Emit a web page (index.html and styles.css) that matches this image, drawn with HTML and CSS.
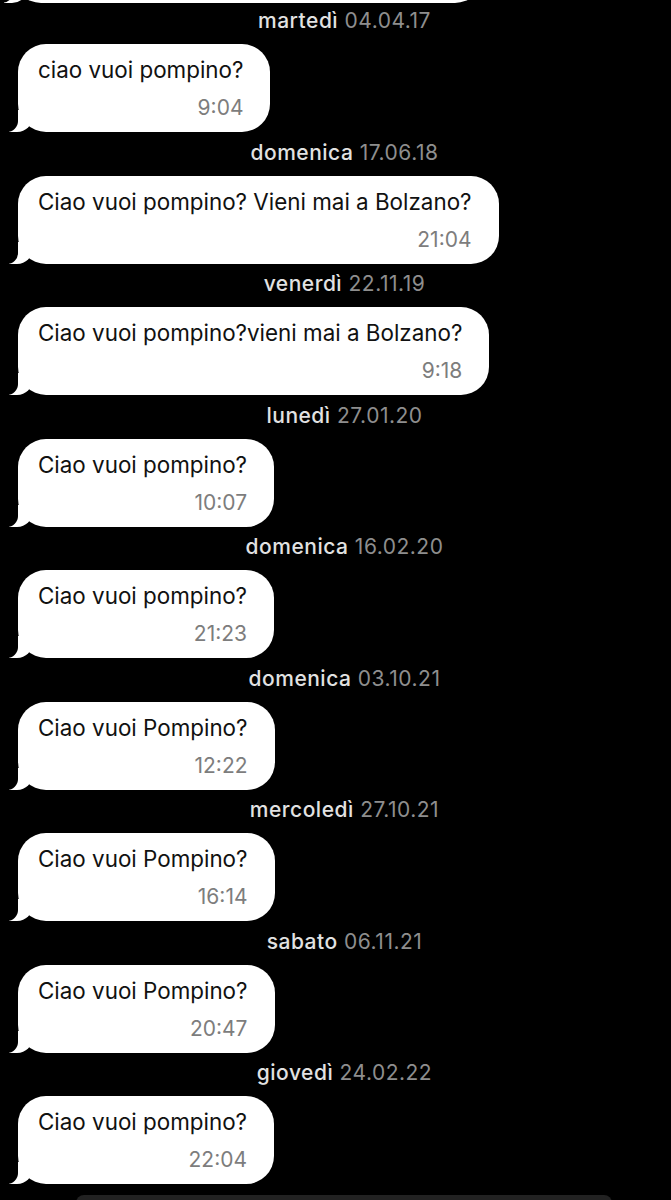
FILE: index.html
```html
<html>
  <head>
    <link rel="stylesheet" href="styles.css">
  </head>
  <body>
    <div class="chat">
      <div class="bubble bubble-cut"></div>

      <div class="day"><span class="dname">martedì</span> 04.04.17</div>
      <div class="bubble">
        <div class="text">ciao vuoi pompino?</div>
        <div class="time">9:04</div>
      </div>

      <div class="day"><span class="dname">domenica</span> 17.06.18</div>
      <div class="bubble">
        <div class="text">Ciao vuoi pompino? Vieni mai a Bolzano?</div>
        <div class="time">21:04</div>
      </div>

      <div class="day"><span class="dname">venerdì</span> 22.11.19</div>
      <div class="bubble">
        <div class="text">Ciao vuoi pompino?vieni mai a Bolzano?</div>
        <div class="time">9:18</div>
      </div>

      <div class="day"><span class="dname">lunedì</span> 27.01.20</div>
      <div class="bubble">
        <div class="text">Ciao vuoi pompino?</div>
        <div class="time">10:07</div>
      </div>

      <div class="day"><span class="dname">domenica</span> 16.02.20</div>
      <div class="bubble">
        <div class="text">Ciao vuoi pompino?</div>
        <div class="time">21:23</div>
      </div>

      <div class="day"><span class="dname">domenica</span> 03.10.21</div>
      <div class="bubble">
        <div class="text">Ciao vuoi Pompino?</div>
        <div class="time">12:22</div>
      </div>

      <div class="day"><span class="dname">mercoledì</span> 27.10.21</div>
      <div class="bubble">
        <div class="text">Ciao vuoi Pompino?</div>
        <div class="time">16:14</div>
      </div>

      <div class="day"><span class="dname">sabato</span> 06.11.21</div>
      <div class="bubble">
        <div class="text">Ciao vuoi Pompino?</div>
        <div class="time">20:47</div>
      </div>

      <div class="day"><span class="dname">giovedì</span> 24.02.22</div>
      <div class="bubble">
        <div class="text">Ciao vuoi pompino?</div>
        <div class="time">22:04</div>
      </div>
    </div>
    <div class="composer"></div>
  </body>
</html>
```

FILE: styles.css
```css
html, body {
  margin: 0;
  width: 100%;
  height: 100%;
  background: #000;
  overflow: hidden;
  font-family: 'Inter', 'Helvetica', arial, sans-serif;
}

.chat {
  display: flex;
  flex-direction: column;
  align-items: flex-start;
  padding: 0 0 0 18px;
}

.day {
  align-self: stretch;
  height: 24px;
  line-height: 26px;
  margin: 0 0 12px;
  text-align: center;
  font-size: 21px;
  letter-spacing: 0.5px;
  color: #8e8e8e;
}

.dname {
  color: #e2e2e2;
  font-weight: 500;
}

.bubble {
  position: relative;
  background: #fff;
  border-radius: 28px;
  padding: 9px 27px 0 20px;
  margin-bottom: 7.5px;
  box-sizing: border-box;
  height: 88px;
  display: flex;
  flex-direction: column;
  align-items: stretch;
}

.bubble::before {
  content: "";
  position: absolute;
  bottom: 0;
  left: -9px;
  width: 24px;
  height: 22px;
  background: #fff;
  border-bottom-right-radius: 16px;
}

.bubble::after {
  content: "";
  position: absolute;
  bottom: 0;
  left: -12px;
  width: 12px;
  height: 22px;
  background: #000;
  border-bottom-right-radius: 11px;
}

.bubble-cut {
  margin-top: -85px;
  margin-left: -5px;
  width: 470px;
  margin-bottom: 5px;
}

.text {
  font-size: 22.4px;
  line-height: 34px;
  color: #111;
  white-space: nowrap;
}

.time {
  font-size: 21px;
  line-height: 42px;
  color: #7d7d7d;
  text-align: right;
}

.composer {
  position: absolute;
  left: 76px;
  width: 536px;
  top: 1195px;
  height: 20px;
  background: #222;
  border-radius: 8px;
}
```
